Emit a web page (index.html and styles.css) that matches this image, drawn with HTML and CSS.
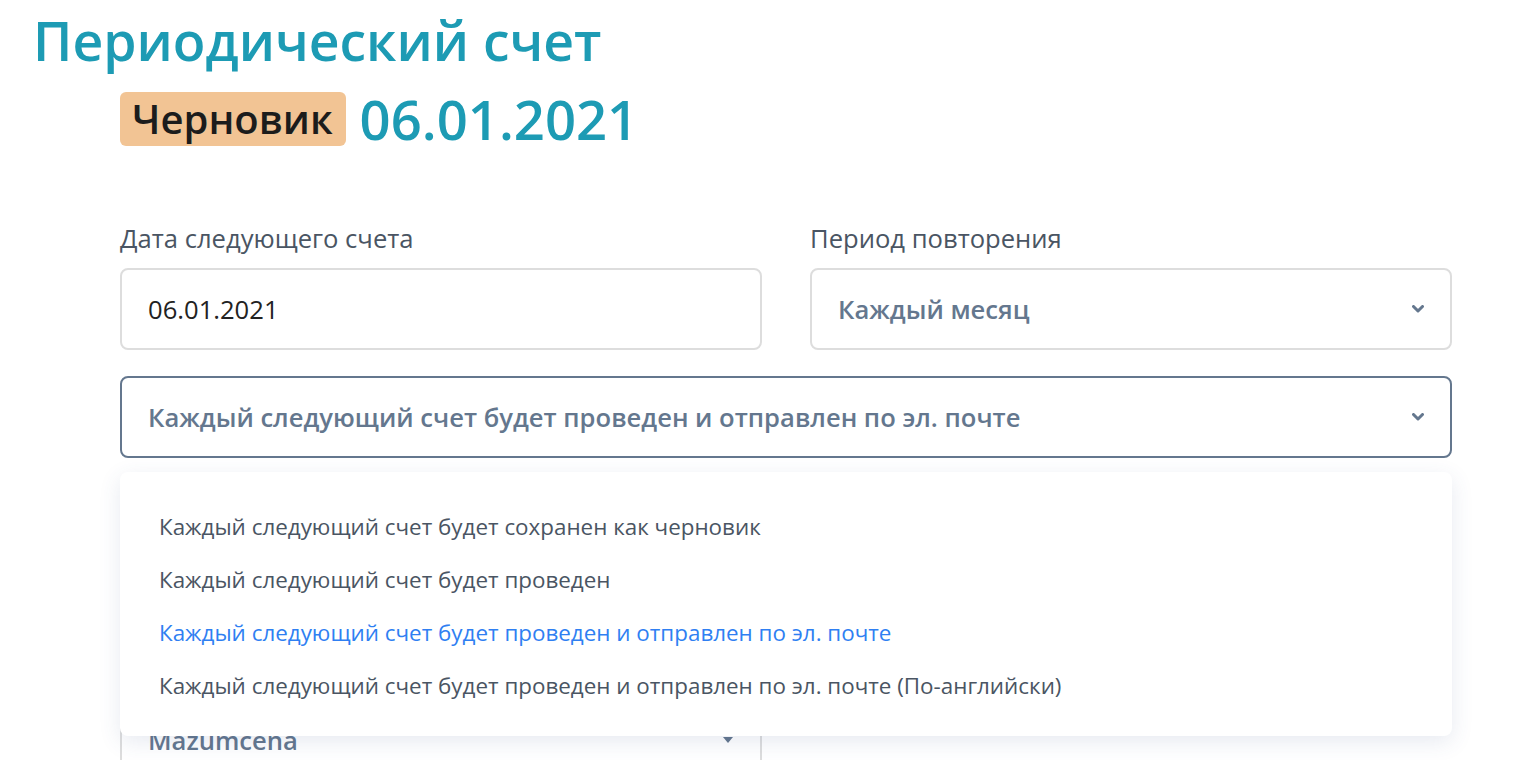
FILE: index.html
```html
<!DOCTYPE html>
<html lang="ru">
<head>
    <meta charset="utf-8">
    <title>Периодический счет</title>
    <link rel="stylesheet" href="styles.css">
</head>
<body>
    <h1 class="page-title">Периодический счет</h1>

    <div class="status-row">
        <span class="badge">Черновик</span>
        <span class="status-date">06.01.2021</span>
    </div>

    <div class="form">
        <div class="form-row">
            <div class="field">
                <label class="field-label">Дата следующего счета</label>
                <div class="input">06.01.2021</div>
            </div>
            <div class="field">
                <label class="field-label">Период повторения</label>
                <div class="select">
                    <span>Каждый месяц</span>
                    <svg class="chevron" viewBox="0 0 12 8"><path d="M1.5 1.5 6 6l4.5-4.5"/></svg>
                </div>
            </div>
        </div>

        <!-- open select with its option list -->
        <div class="select-wrap">
            <div class="select select-open">
                <span>Каждый следующий счет будет проведен и отправлен по эл. почте</span>
                <svg class="chevron" viewBox="0 0 12 8"><path d="M1.5 1.5 6 6l4.5-4.5"/></svg>
            </div>
            <ul class="options">
                <li class="option">Каждый следующий счет будет сохранен как черновик</li>
                <li class="option">Каждый следующий счет будет проведен</li>
                <li class="option option-active">Каждый следующий счет будет проведен и отправлен по эл. почте</li>
                <li class="option">Каждый следующий счет будет проведен и отправлен по эл. почте (По-английски)</li>
            </ul>
        </div>

        <div class="form-row form-row-lower">
            <div class="field">
                <div class="select">
                    <span>Mazumcena</span>
                    <svg class="caret" viewBox="0 0 12 8"><path d="M1 1h10L6 7z"/></svg>
                </div>
            </div>
            <div class="field"></div>
        </div>
    </div>
</body>
</html>
```

FILE: styles.css
```css
body {
    margin: 0;
    background-color: #ffffff;
    font-family: "Open Sans", "Noto Sans", sans-serif;
    color: #4a5563;
}

.page-title {
    margin: 0;
    padding: 10px 0 0 33px;
    font-size: 53.5px;
    font-weight: 600;
    line-height: 62px;
    color: #1d9bb4;
}

.status-row {
    display: flex;
    align-items: center;
    gap: 14px;
    padding: 20px 0 0 120px;
}

.badge {
    display: inline-block;
    background-color: #f2c494;
    color: #1c1c1c;
    border-radius: 6px;
    padding: 0 13px 0 12px;
    height: 54px;
    line-height: 54px;
    font-size: 40px;
    font-weight: 600;
}

.status-date {
    font-size: 54.4px;
    font-weight: 600;
    line-height: 54px;
    color: #1d9bb4;
}

.form {
    padding: 78px 64px 0 120px;
}

.form-row {
    display: grid;
    grid-template-columns: 1fr 1fr;
    gap: 48px;
}

.field-label {
    display: block;
    font-size: 25.6px;
    line-height: 30px;
    margin-bottom: 14px;
    color: #4a5563;
}

.input, .select {
    box-sizing: border-box;
    height: 82px;
    border: 2px solid #dddddd;
    border-radius: 8px;
    padding: 0 26px;
    display: flex;
    align-items: center;
    font-size: 25.6px;
}

.input {
    color: #222222;
}

.select {
    justify-content: space-between;
    font-weight: 600;
    color: #64778e;
}

.chevron {
    width: 12px;
    height: 8px;
    fill: none;
    stroke: #64778e;
    stroke-width: 3;
    stroke-linecap: round;
    stroke-linejoin: round;
}

.caret {
    width: 12px;
    height: 8px;
    fill: #64778e;
}

.select-wrap {
    position: relative;
    margin-top: 26px;
}

.select-open {
    border-color: #64778e;
}

.options {
    position: absolute;
    top: 96px;
    left: 0;
    right: 0;
    z-index: 2;
    margin: 0;
    padding: 28px 0 24px;
    list-style: none;
    background-color: #ffffff;
    border-radius: 8px;
    box-shadow: 0 6px 22px rgba(60, 80, 140, 0.12);
}

.option {
    padding: 0 39px;
    font-size: 22.4px;
    line-height: 53px;
    color: #4a5563;
}

.option-active {
    color: #2f7ff2;
}

.form-row-lower {
    margin-top: 241px;
}
```
